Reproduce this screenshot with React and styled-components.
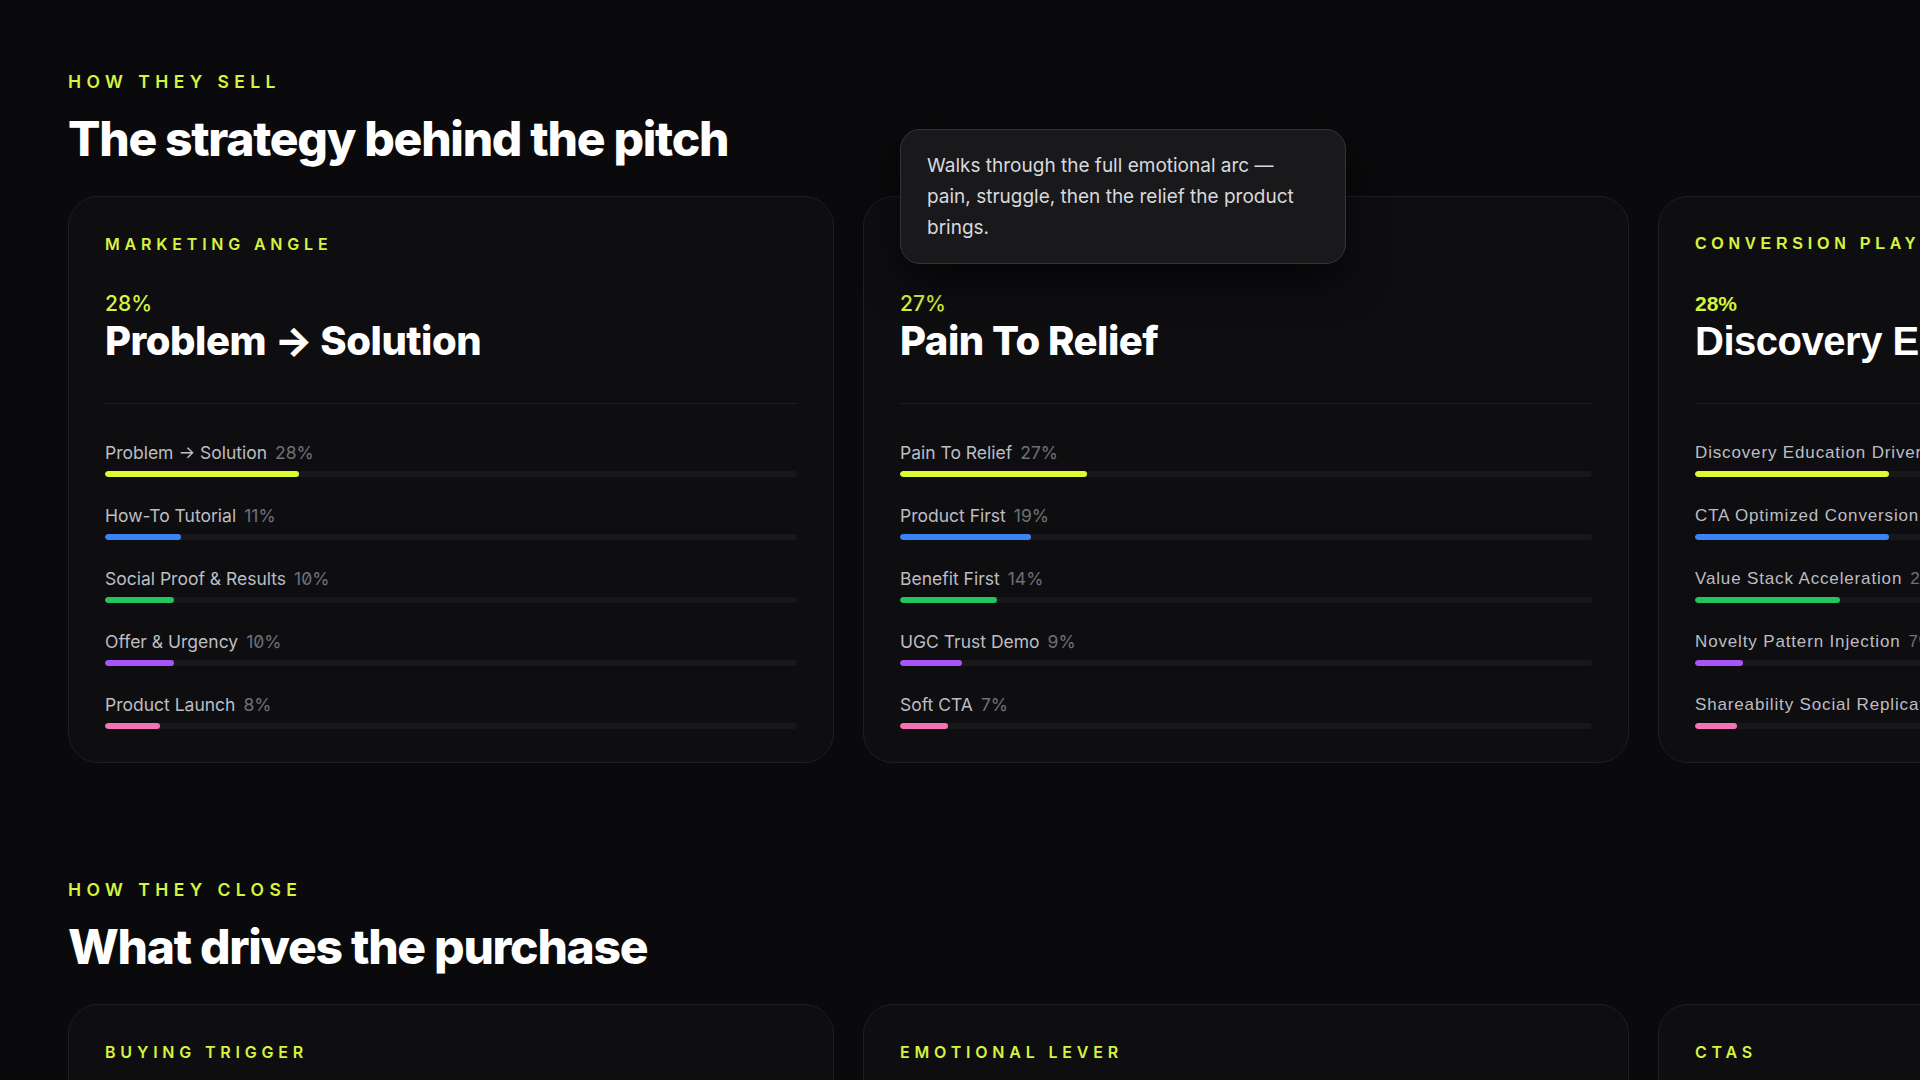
import React from "react";
import styled, { createGlobalStyle, css } from "styled-components";

const sellCards = [
  {
    label: "Marketing Angle",
    share: 28,
    name: "Problem → Solution",
    rows: [
      ["Problem → Solution", 28],
      ["How-To Tutorial", 11],
      ["Social Proof & Results", 10],
      ["Offer & Urgency", 10],
      ["Product Launch", 8]
    ]
  },
  {
    label: "Story Arc",
    share: 27,
    name: "Pain To Relief",
    tip: "Walks through the full emotional arc — pain, struggle, then the relief the product brings.",
    rows: [
      ["Pain To Relief", 27],
      ["Product First", 19],
      ["Benefit First", 14],
      ["UGC Trust Demo", 9],
      ["Soft CTA", 7]
    ]
  },
  {
    label: "Conversion Playbook",
    share: 28,
    name: "Discovery Education Driver",
    wide: true,
    rows: [
      ["Discovery Education Driver", 28],
      ["CTA Optimized Conversion", 28],
      ["Value Stack Acceleration", 21],
      ["Novelty Pattern Injection", 7],
      ["Shareability Social Replication", 6]
    ]
  }
];

const closeCards = ["Buying Trigger", "Emotional Lever", "CTAs"];

const barColors = ["#e0fa32", "#3b82f6", "#22c55e", "#a855f7", "#f472b6"];

export default function App() {
  return (
    <>
      <GlobalStyle />
      <Page>
        <Section>
          <Eyebrow>How they sell</Eyebrow>
          <Title>The strategy behind the pitch</Title>
          <CardRow>
            {sellCards.map(card => (
              <Card key={card.label} $wide={card.wide}>
                {card.tip && <Tooltip>{card.tip}</Tooltip>}
                <CardLabel $wide={card.wide}>{card.label}</CardLabel>
                <Share $wide={card.wide}>{card.share}%</Share>
                <CardName>{card.name}</CardName>
                <Divider />
                <Rows>
                  {card.rows.map(([name, pct], i) => (
                    <Row key={name}>
                      <RowText $wide={card.wide}>
                        {name}
                        <RowPct>{pct}%</RowPct>
                      </RowText>
                      <Track>
                        <Fill $color={barColors[i]} style={{ width: `${pct}%` }} />
                      </Track>
                    </Row>
                  ))}
                </Rows>
              </Card>
            ))}
          </CardRow>
        </Section>

        <Section>
          <Eyebrow>How they close</Eyebrow>
          <Title>What drives the purchase</Title>
          <CardRow>
            {closeCards.map(label => (
              <Card key={label} $tall>
                <CardLabel>{label}</CardLabel>
              </Card>
            ))}
          </CardRow>
        </Section>
      </Page>
    </>
  );
}

const GlobalStyle = createGlobalStyle`
  html, body {
    margin: 0;
    padding: 0;
    background: #0a0a0c;
    overflow: hidden;
  }
  body {
    font-family: Inter, "Noto Sans", sans-serif;
    color: #f4f4f5;
    -webkit-font-smoothing: antialiased;
  }
`;

const Page = styled.main`
  display: flex;
  flex-direction: column;
  gap: 114px;
  padding: 69px 0 0 68px;
  width: 1920px;
  box-sizing: border-box;
`;

const Section = styled.section`
  display: flex;
  flex-direction: column;
`;

const Eyebrow = styled.div`
  font-size: 17.5px;
  line-height: 26px;
  font-weight: 600;
  letter-spacing: 0.31em;
  text-transform: uppercase;
  color: #d6f33f;
`;

const Title = styled.h2`
  margin: 18px 0 30px;
  font-size: 48px;
  line-height: 1.1;
  font-weight: 800;
  letter-spacing: -0.027em;
  color: #ffffff;
`;

const CardRow = styled.div`
  display: flex;
  gap: 29px;
`;

const Card = styled.article`
  position: relative;
  flex: 0 0 766px;
  box-sizing: border-box;
  padding: 35px 36px 33px;
  border: 1px solid #1f1f23;
  border-radius: 30px;
  background: #0e0e11;
  ${p =>
    p.$wide &&
    css`
      font-family: "Liberation Sans", Arial, sans-serif;
    `};
  ${p =>
    p.$tall &&
    css`
      min-height: 320px;
    `};
`;

const Tooltip = styled.div`
  position: absolute;
  top: -68px;
  left: 36px;
  z-index: 5;
  width: 446px;
  box-sizing: border-box;
  padding: 20px 24px 20px 26px;
  border: 1px solid #34343a;
  border-radius: 20px;
  background: #19191c;
  box-shadow: 0 16px 40px rgba(0, 0, 0, 0.65);
  font-size: 19px;
  line-height: 31px;
  color: #d8d8dc;
`;

const CardLabel = styled.div`
  font-size: 16px;
  line-height: 24px;
  font-weight: ${p => (p.$wide ? 700 : 600)};
  letter-spacing: 0.3em;
  text-transform: uppercase;
  color: #d6f33f;
`;

const Share = styled.div`
  margin-top: 35px;
  font-size: 21px;
  line-height: 26px;
  font-weight: ${p => (p.$wide ? 700 : 500)};
  color: #d6f33f;
`;

const CardName = styled.h3`
  margin: 2px 0 0;
  font-size: 40px;
  line-height: 44px;
  font-weight: 800;
  letter-spacing: -0.012em;
  color: #ffffff;
  white-space: nowrap;
`;

const Divider = styled.hr`
  margin: 40px 0 37px;
  border: 0;
  height: 1px;
  background: #1d1d21;
`;

const Rows = styled.div`
  display: flex;
  flex-direction: column;
  gap: 27px;
`;

const Row = styled.div`
  display: flex;
  flex-direction: column;
  gap: 6px;
`;

const RowText = styled.div`
  font-size: ${p => (p.$wide ? "17px" : "17.5px")};
  line-height: 24px;
  color: #bdbdc2;
  white-space: nowrap;
  letter-spacing: ${p => (p.$wide ? "0.05em" : "0")};
`;

const RowPct = styled.span`
  margin-left: 8px;
  color: #707076;
  font-variant-numeric: slashed-zero;
`;

const Track = styled.div`
  height: 6px;
  border-radius: 3px;
  background: #18181b;
  overflow: hidden;
`;

const Fill = styled.div`
  height: 100%;
  border-radius: 3px;
  background: ${p => p.$color};
`;
